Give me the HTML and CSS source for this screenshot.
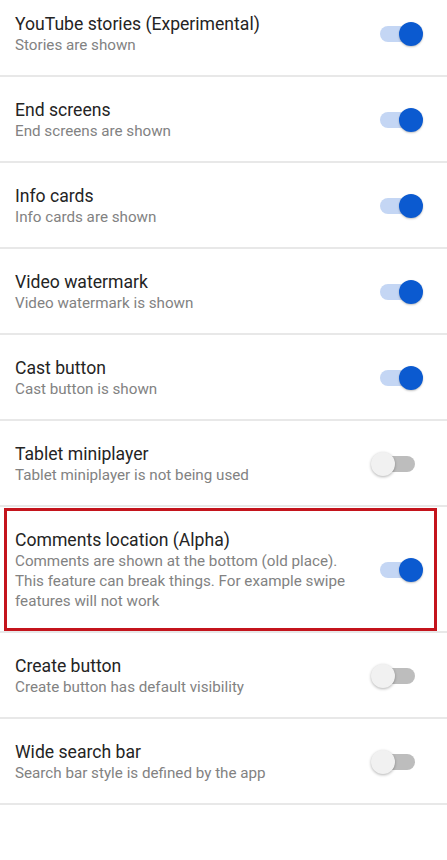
FILE: index.html
```html
<!DOCTYPE html>
<html>
<head>
<meta charset="utf-8">
<link rel="stylesheet" href="styles.css">
</head>
<body>
<div class="list">
  <div class="row">
    <div class="text"><div class="title">YouTube stories (Experimental)</div><div class="summary">Stories are shown</div></div>
    <div class="switch on"><span class="track"></span><span class="thumb"></span></div>
  </div>
  <div class="row">
    <div class="text"><div class="title">End screens</div><div class="summary">End screens are shown</div></div>
    <div class="switch on"><span class="track"></span><span class="thumb"></span></div>
  </div>
  <div class="row">
    <div class="text"><div class="title">Info cards</div><div class="summary">Info cards are shown</div></div>
    <div class="switch on"><span class="track"></span><span class="thumb"></span></div>
  </div>
  <div class="row">
    <div class="text"><div class="title">Video watermark</div><div class="summary">Video watermark is shown</div></div>
    <div class="switch on"><span class="track"></span><span class="thumb"></span></div>
  </div>
  <div class="row">
    <div class="text"><div class="title">Cast button</div><div class="summary">Cast button is shown</div></div>
    <div class="switch on"><span class="track"></span><span class="thumb"></span></div>
  </div>
  <div class="row">
    <div class="text"><div class="title">Tablet miniplayer</div><div class="summary">Tablet miniplayer is not being used</div></div>
    <div class="switch off"><span class="track"></span><span class="thumb"></span></div>
  </div>
  <div class="row highlighted">
    <div class="text"><div class="title">Comments location (Alpha)</div><div class="summary">Comments are shown at the bottom (old place). This feature can break things. For example swipe features will not work</div></div>
    <div class="switch on"><span class="track"></span><span class="thumb"></span></div>
  </div>
  <div class="row">
    <div class="text"><div class="title">Create button</div><div class="summary">Create button has default visibility</div></div>
    <div class="switch off"><span class="track"></span><span class="thumb"></span></div>
  </div>
  <div class="row">
    <div class="text"><div class="title">Wide search bar</div><div class="summary">Search bar style is defined by the app</div></div>
    <div class="switch off"><span class="track"></span><span class="thumb"></span></div>
  </div>
</div>
</body>
</html>
```

FILE: styles.css
```css
html, body {
  margin: 0;
  padding: 0;
  background: #ffffff;
  font-family: Roboto, "Noto Sans", sans-serif;
  overflow: hidden;
}
.list {
  margin-top: -9px;
  display: flex;
  flex-direction: column;
}
.row {
  position: relative;
  display: flex;
  align-items: center;
  gap: 13px;
  padding: 22px 24px 20px 15px;
  border-bottom: 2px solid #e8e8e8;
}
.text {
  flex: 1;
  min-width: 0;
}
.title {
  font-size: 17.6px;
  line-height: 22px;
  color: #242424;
}
.summary {
  font-size: 15.2px;
  line-height: 20px;
  color: #828282;
}
.switch {
  position: relative;
  flex: 0 0 52px;
  width: 52px;
  height: 26px;
}
.track {
  position: absolute;
  left: 9px;
  top: 5px;
  width: 35px;
  height: 16px;
  border-radius: 8px;
}
.thumb {
  position: absolute;
  top: 1px;
  width: 24px;
  height: 24px;
  border-radius: 50%;
}
.on .track { background: #c4d6f4; }
.on .thumb {
  right: 0;
  background: #0b5ad0;
  box-shadow: 0 1px 2px rgba(0,0,0,0.25);
}
.off .track { background: #bdbdbd; }
.off .thumb {
  left: 0;
  background: #f1f1f1;
  box-shadow: 0 1px 3px rgba(0,0,0,0.3);
}
.highlighted::after {
  content: "";
  position: absolute;
  left: 4px;
  right: 10px;
  top: 1px;
  bottom: 0;
  border: 3px solid #c4141c;
  pointer-events: none;
}
```
